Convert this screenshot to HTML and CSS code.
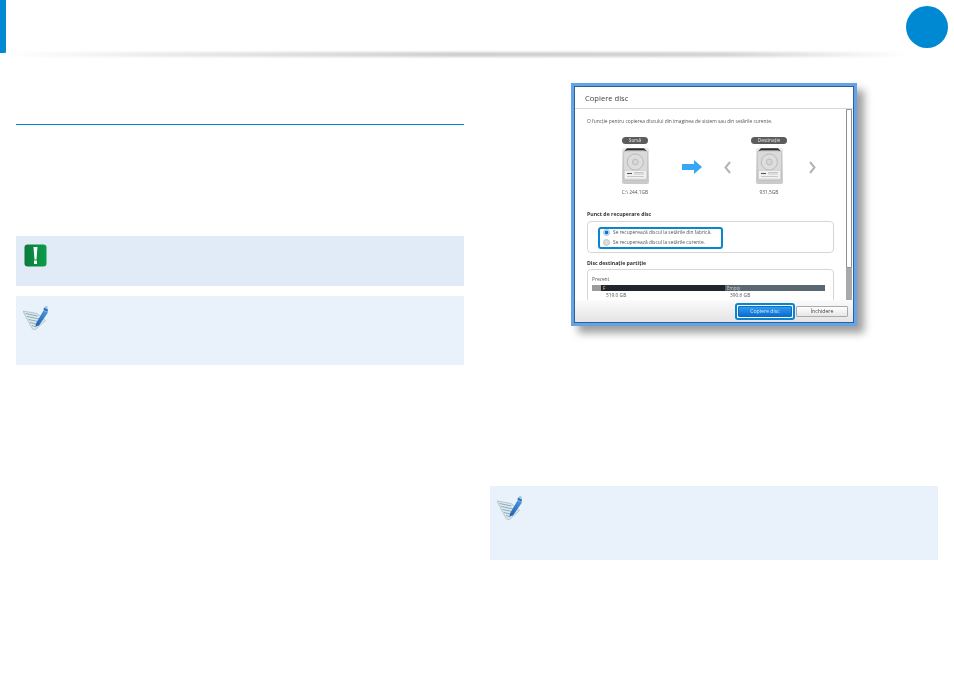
FILE: index.html
```html
<!DOCTYPE html>
<html lang="ro">
<head>
<meta charset="utf-8">
<title>Copiere disc</title>
<link rel="stylesheet" href="styles.css">
</head>
<body>
<svg class="sprite" aria-hidden="true">
  <defs>
    <linearGradient id="diskFace" x1="0" y1="0" x2="0" y2="1">
      <stop offset="0" stop-color="#e9e9e9"/>
      <stop offset="1" stop-color="#c9c9c9"/>
    </linearGradient>
    <linearGradient id="pen" x1="0" y1="1" x2="1" y2="0">
      <stop offset="0" stop-color="#1f5fb0"/>
      <stop offset="1" stop-color="#4a9be0"/>
    </linearGradient>
    <linearGradient id="alertFace" x1="0" y1="0" x2="1" y2="0">
      <stop offset="0" stop-color="#0a7a3e"/>
      <stop offset="1" stop-color="#0a9e48"/>
    </linearGradient>
  </defs>
  <symbol id="note" viewBox="0 0 25 25">
    <path d="M0 6 14 8.500 22.500 15.500 12.500 24.500 9.500 24 4 14Z" fill="#dbe8ee" stroke="#93adbb" stroke-width=".6"/>
    <path d="M2.500 8.500 14.500 11M4 11.500 16.500 14M5.500 14.500 17.500 17M7 17.500 15 19.500M9 20.500 13.500 22" stroke="#86a5b6" stroke-width=".9" fill="none"/>
    <path d="M13 18.500 20.500 5.500 25 7.500 16 20.500 12.500 21.500Z" fill="url(#pen)"/>
    <path d="M21 2.500 25 4.500 24.500 7 20.500 5Z" fill="#2b6db8"/>
    <path d="M22.500 .8 25 2 24.300 4 21.800 2.800Z" fill="#9cc4e6"/>
  </symbol>
  <symbol id="disk" viewBox="0 0 27 36">
    <rect x="0" y="0" width="27" height="36" rx="2" fill="url(#diskFace)"/>
    <path d="M1.500 4 5 .3H22L25.500 4 22 2.500H5Z" fill="#2b2d30"/>
    <rect x="1.500" y="3" width="24" height="29.500" rx="2" fill="#dadada" stroke="#b0b0b0" stroke-width=".5"/>
    <circle cx="13.300" cy="14" r="8" fill="#dedede" stroke="#a2a2a2" stroke-width=".6"/>
    <circle cx="13.300" cy="14" r="3" fill="#d6d6d6" stroke="#a0a0a0" stroke-width=".5"/>
    <rect x="2.500" y="22.500" width="22" height="8.500" fill="#f2f2f2" stroke="#bbb" stroke-width=".4"/>
    <path d="M5 25.500H10" stroke="#555" stroke-width="1.100"/>
    <path d="M12 24.500H22M12 26H22M5 28.500H22" stroke="#a8a8a8" stroke-width=".6"/>
  </symbol>
</svg>

<header class="top">
  <div class="marker"></div>
  <div class="shade"></div>
  <div class="badge"></div>
</header>

<main class="columns">
  <section class="col col-left">
    <div class="rule"></div>
    <div class="callout callout-alert">
      <svg class="alert-icon" viewBox="0 0 23 23" aria-hidden="true">
        <rect x=".5" y=".5" width="22" height="22" rx="3" fill="url(#alertFace)"/>
        <path d="M9.500 3h4l-1 12.500h-2Z" fill="#fff"/>
        <rect x="10" y="16.500" width="3" height="3.500" fill="#fff"/>
      </svg>
    </div>
    <div class="callout callout-note">
      <svg class="note-icon"><use href="#note"/></svg>
    </div>
  </section>

  <section class="col col-right">
    <div class="window">
      <div class="win-title">Copiere disc</div>
      <div class="win-body">
        <div class="win-content">
          <p class="desc">O funcție pentru copierea discului din imaginea de sistem sau din setările curente.</p>
          <div class="disks">
            <div class="disk-item">
              <span class="pill">Sursă</span>
              <svg class="disk"><use href="#disk"/></svg>
              <span class="disk-label">C:\ 244.1GB</span>
            </div>
            <svg class="arrow" viewBox="0 0 20 14" aria-hidden="true">
              <path d="M0 4H12V0L20 7 12 14V10H0Z" fill="#36a6f5"/>
            </svg>
            <svg class="chev chev-left" viewBox="0 0 7 13" aria-hidden="true">
              <path d="M6 1 1.500 6.500 6 12" fill="none" stroke="#b4b4b4" stroke-width="2"/>
            </svg>
            <div class="disk-item disk-item-dest">
              <span class="pill">Destinație</span>
              <svg class="disk"><use href="#disk"/></svg>
              <span class="disk-label">931.5GB</span>
            </div>
            <svg class="chev chev-right" viewBox="0 0 7 13" aria-hidden="true">
              <path d="M1 1 5.500 6.500 1 12" fill="none" stroke="#b4b4b4" stroke-width="2"/>
            </svg>
          </div>
          <h3 class="group-title group-title-first">Punct de recuperare disc</h3>
          <div class="group group-radio">
            <div class="radio-mark">
              <div class="radio-row"><span class="radio radio-on"></span>Se recuperează discul la setările din fabrică.</div>
              <div class="radio-row"><span class="radio"></span>Se recuperează discul la setările curente.</div>
            </div>
          </div>
          <h3 class="group-title group-title-second">Disc destinație partiție</h3>
          <div class="group group-part">
            <div class="present">Prezent</div>
            <div class="bar">
              <span class="seg seg-sys"></span>
              <span class="seg seg-f">F</span>
              <span class="seg seg-empty">Empty</span>
            </div>
            <div class="sizes"><span class="size-f">519.0 GB</span><span>390.6 GB</span></div>
          </div>
        </div>
        <div class="scrollbar"><div class="thumb"></div></div>
      </div>
      <div class="win-foot">
        <div class="btn-mark"><button class="btn btn-primary">Copiere disc</button></div>
        <button class="btn">Închidere</button>
      </div>
    </div>
    <div class="callout callout-note callout-note-wide">
      <svg class="note-icon"><use href="#note"/></svg>
    </div>
  </section>
</main>
</body>
</html>
```

FILE: styles.css
```css
* { box-sizing: border-box; }
html, body { margin: 0; padding: 0; background: #fff; }
body { width: 954px; height: 677px; overflow: hidden; font-family: "Open Sans", "Liberation Sans", sans-serif; }

.sprite { position: absolute; width: 0; height: 0; }

.top { position: relative; height: 57px; }
.marker { width: 6px; height: 53px; background: #0089d3; }
.shade {
  height: 5px;
  margin: -1px 48px 0 6px;
  background: linear-gradient(90deg, #fff 0%, #e8e8e8 20%, #cfcfcf 50%, #d4d4d4 80%, #fff 100%);
  filter: blur(1px);
}
.badge {
  position: absolute;
  left: 906px;
  top: 6px;
  width: 42px;
  height: 42px;
  border-radius: 50%;
  background: #0089d3;
}

.columns { display: flex; gap: 26px; padding-left: 16px; }
.col { width: 448px; flex: none; }

.rule { height: 1px; margin-top: 67px; background: #0089d3; }

.callout { padding: 8px; }
.callout-alert { height: 50px; margin-top: 111px; background: #e0ebf7; }
.callout-note { height: 69px; margin-top: 10px; background: #e9f2fa; }
.callout-note-wide { height: 74px; margin-top: 160px; }
.alert-icon { display: block; width: 23px; height: 23px; }
.note-icon { display: block; width: 25px; height: 25px; margin: 1px 0 0 -1px; }

.window {
  display: flex;
  flex-direction: column;
  width: 286px;
  height: 243px;
  margin: 26px 0 0 81px;
  border: 4px solid #66a3e6;
  background: #fff;
  box-shadow: 7px 7px 8px rgba(0, 0, 0, .38);
  outline: 1px solid #2f5f96;
  outline-offset: -4px;
  color: #555;
  font-size: 4.850px;
  line-height: 7px;
}
.win-title {
  height: 22px;
  flex: none;
  padding-left: 10px;
  border-bottom: 1px solid #d8d8d8;
  color: #444;
  font-size: 7.600px;
  line-height: 22px;
  filter: blur(.25px);
}
.win-body { display: flex; flex: 1; min-height: 0; overflow: hidden; }
.win-content { flex: 1; min-width: 0; padding: 0 0 0 12px; filter: blur(.35px); }
.desc { margin: 9px 0 0; white-space: nowrap; }

.disks { display: flex; align-items: flex-start; height: 64px; margin-top: 12px; }
.disk-item { display: flex; flex-direction: column; align-items: center; width: 36px; margin-left: 30px; }
.disk-item-dest { margin-left: 20px; }
.pill {
  height: 7px;
  padding: 0 7px;
  border-radius: 4px;
  background: #5c5c5c;
  color: #e4e4e4;
  font-size: 4.800px;
  line-height: 7px;
  white-space: nowrap;
}
.disk { display: block; width: 27px; height: 36px; margin-top: 4px; }
.disk-label { margin-top: 5px; white-space: nowrap; }
.arrow { flex: none; width: 20px; height: 14px; margin: 23px 0 0 29px; }
.chev { flex: none; width: 7px; height: 13px; margin-top: 24px; }
.chev-left { margin-left: 22px; }
.chev-right { margin-left: 22px; }

.group-title { margin: 0; color: #333; font-size: 5.200px; font-weight: 700; line-height: 7px; }
.group-title-first { margin-top: 10px; }
.group-title-second { margin-top: 7px; }
.group { width: 247px; border: 1px solid #d6d6d6; border-radius: 4px; background: #fff; }
.group-radio { height: 32px; margin-top: 3px; padding: 5px 0 0 10px; }
.radio-mark {
  display: flex;
  flex-direction: column;
  justify-content: center;
  gap: 4px;
  width: 125px;
  height: 22px;
  padding: 0 0 2px 3px;
  border: 2px solid #0a86d0;
  border-radius: 3px;
}
.radio-row { display: flex; align-items: center; gap: 3px; height: 6px; white-space: nowrap; }
.radio { width: 7px; height: 7px; border-radius: 50%; border: 1px solid #c4c4c4; background: #ddd; flex: none; }
.radio-on { border-color: #9dc6e6; background: radial-gradient(circle, #0a78cc 45%, #cfe3f3 60%); }

.group-part { height: 40px; margin-top: 2px; padding: 6px 0 0 4px; }
.present { line-height: 7px; }
.bar { display: flex; width: 233px; height: 6px; margin-top: 2px; color: #ccc; font-size: 4.500px; line-height: 6px; }
.seg-sys { width: 9px; background: #9b9b9b; }
.seg-f { width: 124px; padding-left: 2px; background: #20252e; }
.seg-empty { width: 100px; padding-left: 2px; background: #5a6873; }
.sizes { display: flex; margin: 1px 0 0 14px; }
.size-f { width: 124px; }

.scrollbar { flex: none; width: 6px; margin-right: 1px; background: #a9a9a9; }
.thumb { height: 159px; border: 1px solid #8f8f8f; border-top-color: #999; border-radius: 2px; background: #fff; }

.win-foot {
  display: flex;
  flex: none;
  align-items: center;
  justify-content: flex-end;
  gap: 3px;
  height: 22px;
  padding-right: 5px;
  position: relative;
  background: linear-gradient(#fbfbfb, #e4e4e4);
}
.btn {
  width: 52px;
  height: 11px;
  padding: 0;
  border: 1px solid #aaa;
  border-radius: 1px;
  background: linear-gradient(#fff, #e6e6e6);
  color: #444;
  font-family: inherit;
  font-size: 5.200px;
  line-height: 9px;
  filter: blur(.2px);
}
.btn-primary { display: block; width: 54px; border-color: #0a6fc0; background: linear-gradient(#2f9cf0, #0a6ed0); color: #cfe6fa; }
.btn-mark { padding: 1px; border: 2px solid #0a86d0; border-radius: 3px; margin-right: -2px; background: #fff; }
```
